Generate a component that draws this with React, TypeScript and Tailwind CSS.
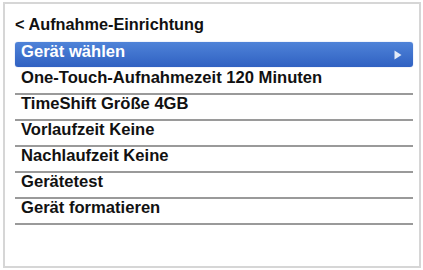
import React from "react";

const ITEMS = [
  "One-Touch-Aufnahmezeit 120 Minuten",
  "TimeShift Größe 4GB",
  "Vorlaufzeit Keine",
  "Nachlaufzeit Keine",
  "Gerätetest",
  "Gerät formatieren",
];

function ArrowIcon() {
  return (
    <svg width="8" height="10" viewBox="0 0 8 10" className="block">
      <path d="M0.5 0.5 L7.5 5 L0.5 9.5 Z" fill="#e4ebf7" />
    </svg>
  );
}

function MenuRow({ label }: { label: string }) {
  return (
    <div className="flex h-[26px] flex-col">
      <span className="pl-[6px] text-[16.6px] font-bold leading-[17px] text-[#111]">
        {label}
      </span>
      <div className="mt-auto h-[2px] bg-[#9a9a9a]" />
    </div>
  );
}

export default function App() {
  return (
    <div
      className="h-[270px] w-[423px] bg-white pl-[3px] pt-[2px]"
      style={{ fontFamily: '"Liberation Sans", Arial, sans-serif' }}
    >
      <div className="flex h-[266px] w-[418px] flex-col border-2 border-[#d6d6d6] bg-white pl-[10px] pr-[6px] pt-[10px]">
        <h1 className="text-[16.3px] font-bold leading-[20px] text-[#111]">
          &lt; Aufnahme-Einrichtung
        </h1>
        <div className="mt-[8px] flex flex-col">
          <div className="mb-[2px] flex h-[25px] justify-between rounded-[3px] bg-gradient-to-b from-[#4f83d8] to-[#3061c2] pl-[6px] pr-[11px] pt-px shadow-[0_0_1px_#6d93d8]">
            <span className="text-[16.6px] font-bold leading-[17px] text-white">
              Gerät wählen
            </span>
            <span className="self-center">
              <ArrowIcon />
            </span>
          </div>
          {ITEMS.map((item) => (
            <MenuRow key={item} label={item} />
          ))}
        </div>
      </div>
    </div>
  );
}
